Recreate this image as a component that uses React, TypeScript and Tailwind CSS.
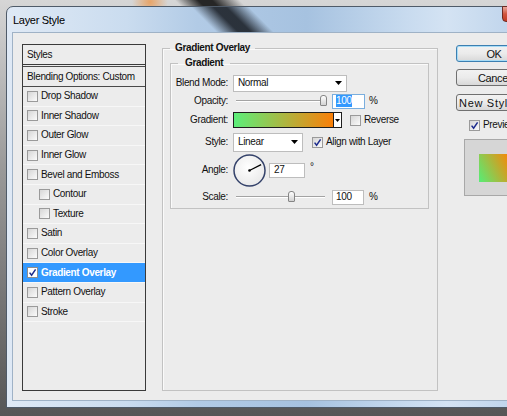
import React from "react";

const styleItems: { label: string; indent?: boolean; on?: boolean }[] = [
  { label: "Drop Shadow" },
  { label: "Inner Shadow" },
  { label: "Outer Glow" },
  { label: "Inner Glow" },
  { label: "Bevel and Emboss" },
  { label: "Contour", indent: true },
  { label: "Texture", indent: true },
  { label: "Satin" },
  { label: "Color Overlay" },
  { label: "Gradient Overlay", on: true },
  { label: "Pattern Overlay" },
  { label: "Stroke" },
];

function Check({ on, white }: { on?: boolean; white?: boolean }) {
  return (
    <span
      className={
        white
          ? "flex h-[11px] w-[11px] shrink-0 items-center justify-center border border-[#8d8d8d] bg-white"
          : "flex h-[11px] w-[11px] shrink-0 items-center justify-center border border-[#9a9a9a] bg-[linear-gradient(135deg,#d6d6d6,#fbfbfb)]"
      }
    >
      {on && (
        <svg viewBox="0 0 9 9" className="h-[9px] w-[9px]">
          <path d="M1.6 4.6 L3.6 7.2 L7.6 1.4" fill="none" stroke="#1b2a8c" strokeWidth="1.5" />
        </svg>
      )}
    </span>
  );
}

function Arrow() {
  return (
    <svg width="7" height="4" viewBox="0 0 7 4">
      <path d="M0 0H7L3.5 4Z" fill="#000" />
    </svg>
  );
}

function Label({ children }: { children: React.ReactNode }) {
  return <div className="flex w-[50px] shrink-0 justify-end whitespace-nowrap">{children}</div>;
}

export default function App() {
  return (
    <div className="h-[416px] w-[507px] overflow-hidden bg-[linear-gradient(45deg,transparent_64%,#262626_66.5%,#262626_68%,transparent_71%),radial-gradient(circle_at_150px_2px,#e7a468,transparent_18px),linear-gradient(to_bottom,#d6d6d6,#9a9a9a_40%,#565656)] pl-[6px] pt-[6px] font-['Liberation_Sans',Arial,sans-serif] text-[10px] leading-[12px] tracking-[-0.35px] text-[#111]">
      <div className="flex h-[402px] w-[560px] flex-col rounded-tl-[7px] border border-[#4f5b69] bg-[linear-gradient(45deg,transparent_61%,rgba(20,24,30,0.85)_63.3%,rgba(20,24,30,0.85)_64.6%,transparent_67%),linear-gradient(to_right,#dfe9f5,#cadcef_120px,#b2cbe6_190px,#a6c2e0_300px,#c8dbef_400px,#d4e3f3_440px,#b5cde8_540px)] px-[5px] pb-[6px]">
        {/* title bar */}
        <div className="flex h-[25px] shrink-0">
          <div className="flex w-[490px] items-center pl-[1px] text-[11px] tracking-[-0.3px] text-black">Layer Style</div>
          <div className="-mt-[1px] h-[16px] w-[43px] rounded-b-[4px] border border-[#6d2a22] bg-[linear-gradient(to_bottom,#e9a99b,#d0553f_50%,#c23a22)]" />
        </div>

        {/* client area */}
        <div className="flex flex-1 items-start border border-[#9fb2c6] bg-[#ececec] pl-[9px] pt-[9px]">
          {/* styles list */}
          <div className="mt-[2px] flex h-[347px] w-[124px] shrink-0 flex-col border border-[#3a3a3a] bg-[#ececec]">
            <div className="flex h-[20px] shrink-0 items-center border-b border-[#3a3a3a] pl-[4px]">Styles</div>
            <div className="h-[1px] shrink-0" />
            <div className="flex h-[21px] shrink-0 items-center border-y border-[#4a4a4a] pl-[4px]">
              Blending Options: Custom
            </div>
            {styleItems.map((it) => (
              <div
                key={it.label}
                className={
                  it.on
                    ? "flex h-[19.6px] shrink-0 items-center gap-[3px] border-b border-[#f7f7f7] bg-[#3399ff] pl-[4px] font-bold text-white"
                    : it.indent
                      ? "flex h-[19.6px] shrink-0 items-center gap-[3px] border-b border-[#f7f7f7] pl-[16px]"
                      : "flex h-[19.6px] shrink-0 items-center gap-[3px] border-b border-[#f7f7f7] pl-[4px]"
                }
              >
                <Check on={it.on} white={it.on} />
                <span>{it.label}</span>
              </div>
            ))}
          </div>

          {/* Gradient Overlay group */}
          <fieldset className="ml-[16px] h-[349px] w-[276px] shrink-0 border border-[#c2c2c2] pl-[7px] shadow-[inset_1px_1px_0_#fafafa]">
            <legend className="px-[5px] font-bold">Gradient Overlay</legend>
            <fieldset className="mt-[3px] w-[259px] border border-[#c2c2c2] pl-[7px] shadow-[inset_1px_1px_0_#fafafa]">
              <legend className="px-[7px] font-bold">Gradient</legend>
              <div className="flex flex-col pt-[5px]">
                {/* blend mode */}
                <div className="flex h-[18px] items-center">
                  <Label>Blend Mode:</Label>
                  <div className="ml-[5px] flex h-[17px] w-[114px] items-center justify-between border border-[#bdbdbd] bg-white pl-[4px] pr-[4px]">
                    <span>Normal</span>
                    <Arrow />
                  </div>
                </div>

                {/* opacity */}
                <div className="flex h-[18px] items-center">
                  <Label>Opacity:</Label>
                  <div className="relative ml-[8px] h-[12px] w-[91px]">
                    <div className="absolute left-0 right-0 top-[5px] h-[2px] border-b border-t border-b-white border-t-[#a3a3a3]" />
                    <div className="absolute left-[84px] top-0 h-[11px] w-[7px] rounded-t-[3px] rounded-b-[1px] border border-[#858585] bg-[linear-gradient(to_bottom,#ffffff,#d2d2d2)]" />
                  </div>
                  <div className="ml-[5px] flex h-[15px] w-[33px] items-center border border-[#7aaede] bg-white pl-[3px]">
                    <span className="bg-[#3399ff] text-white">100</span>
                  </div>
                  <span className="ml-[4px]">%</span>
                </div>

                {/* gradient */}
                <div className="flex h-[20px] items-center">
                  <Label>Gradient:</Label>
                  <div className="ml-[5px] flex h-[16px] w-[109px] border border-[#1e1e1e]">
                    <div className="flex-1 bg-[linear-gradient(to_right,#5cef7a,#fa7f08)]" />
                    <div className="flex w-[8px] items-center justify-center border-l border-[#1e1e1e] bg-white">
                      <svg width="5" height="3" viewBox="0 0 5 3">
                        <path d="M0 0H5L2.5 3Z" fill="#000" />
                      </svg>
                    </div>
                  </div>
                  <div className="ml-[8px]">
                    <Check />
                  </div>
                  <span className="ml-[3px]">Reverse</span>
                </div>

                {/* style */}
                <div className="flex h-[24px] items-center">
                  <Label>Style:</Label>
                  <div className="ml-[5px] flex h-[19px] w-[70px] items-center justify-between border border-[#bdbdbd] bg-white pl-[4px] pr-[4px]">
                    <span>Linear</span>
                    <Arrow />
                  </div>
                  <div className="ml-[9px]">
                    <Check on />
                  </div>
                  <span className="ml-[3px]">Align with Layer</span>
                </div>

                {/* angle */}
                <div className="flex h-[32px] items-center">
                  <Label>Angle:</Label>
                  <svg width="33" height="33" viewBox="0 0 33 33" className="ml-[5px]">
                    <defs>
                      <radialGradient id="dial" cx="0.45" cy="0.4" r="0.7">
                        <stop offset="0" stopColor="#ffffff" />
                        <stop offset="1" stopColor="#e6e6e6" />
                      </radialGradient>
                    </defs>
                    <circle cx="16.5" cy="16.5" r="15.5" fill="url(#dial)" stroke="#34426a" strokeWidth="1.5" />
                    <line x1="16.5" y1="16.5" x2="28.1" y2="10.6" stroke="#000" strokeWidth="1.2" />
                    <circle cx="16.5" cy="16.5" r="1.3" fill="#000" />
                  </svg>
                  <div className="ml-[3px] flex h-[15px] w-[36px] items-center border border-[#bdbdbd] bg-white pl-[4px]">27</div>
                  <span className="-mt-[7px] ml-[5px]">°</span>
                </div>

                {/* scale */}
                <div className="flex h-[22px] items-center">
                  <Label>Scale:</Label>
                  <div className="relative ml-[8px] h-[12px] w-[89px]">
                    <div className="absolute left-0 right-0 top-[5px] h-[2px] border-b border-t border-b-white border-t-[#a3a3a3]" />
                    <div className="absolute left-[52px] top-0 h-[11px] w-[7px] rounded-t-[3px] rounded-b-[1px] border border-[#858585] bg-[linear-gradient(to_bottom,#ffffff,#d2d2d2)]" />
                  </div>
                  <div className="ml-[7px] flex h-[15px] w-[32px] items-center border border-[#bdbdbd] bg-white pl-[3px]">100</div>
                  <span className="ml-[5px]">%</span>
                </div>
              </div>
            </fieldset>
          </fieldset>

          {/* buttons */}
          <div className="ml-[18px] mt-[3px] flex w-[76px] shrink-0 flex-col">
            <div className="flex h-[17px] items-center justify-center rounded-[3px] border border-[#3c7fb1] bg-[linear-gradient(to_bottom,#f2f2f2,#ebebeb_50%,#d8d8d8)] text-[11px] shadow-[inset_0_0_0_1px_#a8dcf6]">
              OK
            </div>
            <div className="mt-[7px] flex h-[17px] items-center justify-center rounded-[3px] border border-[#707070] bg-[linear-gradient(to_bottom,#f2f2f2,#ebebeb_50%,#d8d8d8)] text-[11px]">
              Cancel
            </div>
            <div className="mt-[8px] flex h-[17px] items-center rounded-[3px] border border-[#707070] bg-[linear-gradient(to_bottom,#f2f2f2,#ebebeb_50%,#d8d8d8)] pl-[2px] text-[11px] tracking-[0.7px]">
              New Style...
            </div>
            <div className="ml-[13px] mt-[8px] flex items-center gap-[3px]">
              <Check on />
              <span>Preview</span>
            </div>
            <div className="ml-[8px] mt-[8px] flex h-[57px] w-[60px] items-center border border-[#a8a8a8] bg-[#d6d6d6] pl-[14px]">
              <div className="h-[28px] w-[28px] bg-[linear-gradient(63deg,#55ee77,#f38a0a)]" />
            </div>
          </div>
        </div>
      </div>
    </div>
  );
}
